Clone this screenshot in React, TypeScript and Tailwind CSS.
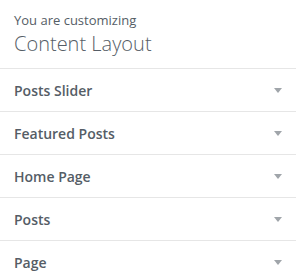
import React from "react";

const sections = ["Posts Slider", "Featured Posts", "Home Page", "Posts", "Page"];

const Arrow = () => (
  <svg width="8" height="5" viewBox="0 0 8 5" className="shrink-0">
    <path d="M0 0 H8 L4 5 Z" fill="#a0a5aa" />
  </svg>
);

const App = () => {
  return (
    <div
      className="w-[296px] h-[279px] bg-white overflow-hidden text-[#555d66]"
      style={{ fontFamily: '"Open Sans", "Noto Sans", sans-serif' }}
    >
      <div className="h-[69px] border-b border-[#e6e6e6] pl-[14px] pt-[11px]">
        <div className="text-[13px] leading-[18px]">You are customizing</div>
        <div className="text-[20px] leading-[28px] font-light mt-[1px]">Content Layout</div>
      </div>
      {sections.map((name) => (
        <div
          key={name}
          className="h-[43px] border-b border-[#e6e6e6] flex items-center justify-between pl-[14px] pr-[14px]"
        >
          <span className="text-[14px] font-semibold">{name}</span>
          <Arrow />
        </div>
      ))}
    </div>
  );
};

export default App;
